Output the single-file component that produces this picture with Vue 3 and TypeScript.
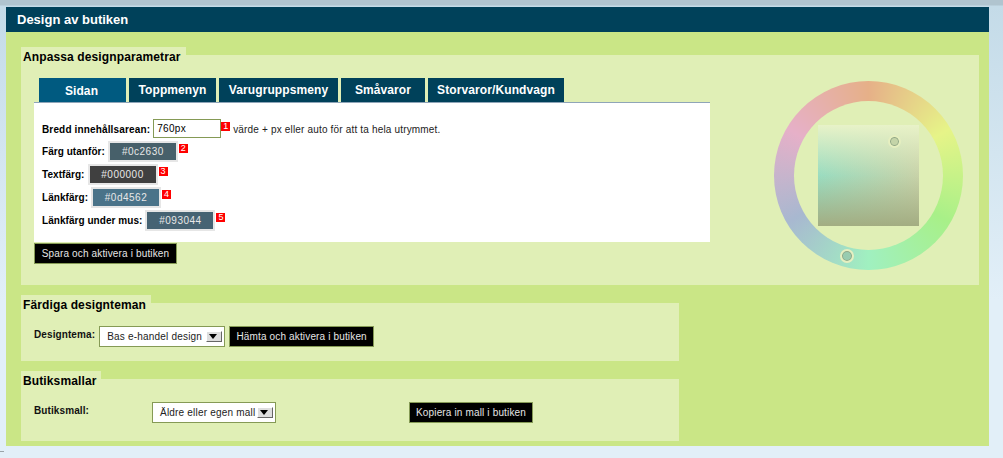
<script setup lang="ts">
import { ref } from 'vue'

const tabs = ['Sidan', 'Toppmenyn', 'Varugruppsmeny', 'Småvaror', 'Storvaror/Kundvagn']
const widths = [87, 87, 119, 84, 136]
const active = ref(0)
const colors = [
  { label: 'Färg utanför:', value: '#0c2630', bg: '#47606a', n: 2 },
  { label: 'Textfärg:', value: '#000000', bg: '#404040', n: 3 },
  { label: 'Länkfärg:', value: '#0d4562', bg: '#4a7389', n: 4 },
  { label: 'Länkfärg under mus:', value: '#093044', bg: '#466373', n: 5 }
]
const hues = ['#e6b088', '#e6f488', '#a8f088', '#a0f0c0', '#a8b8d0', '#e6b0c8', '#e6b088']
const ringGradient = `conic-gradient(${hues.join(',')})`
</script>

<template>
  <div class="page">
    <span class="speck"></span>
    <div class="panel">
      <h1 class="title">Design av butiken</h1>
      <div class="content">
        <section class="box">
          <h2 class="legend">Anpassa designparametrar</h2>
          <div class="body body-main">
            <div class="left">
              <div class="tabs">
                <button
                  v-for="(t, i) in tabs"
                  :key="t"
                  class="tab"
                  :class="{ on: active === i }"
                  :style="{ width: widths[i] + 'px' }"
                  @click="active = i"
                >{{ t }}</button>
              </div>
              <div class="sheet">
                <div class="row first">
                  <label>Bredd innehållsarean:</label>
                  <input class="text" value="760px" />
                  <sup class="num">1</sup>
                  <span class="hint">värde + px eller auto för att ta hela utrymmet.</span>
                </div>
                <div v-for="c in colors" :key="c.n" class="row">
                  <label>{{ c.label }}</label>
                  <span class="swatch" :style="{ background: c.bg }">{{ c.value }}</span>
                  <sup class="num">{{ c.n }}</sup>
                </div>
              </div>
              <button class="btn save">Spara och aktivera i butiken</button>
            </div>
            <div class="wheel" :style="{ background: ringGradient }">
              <div class="hole">
                <div class="square">
                  <span class="knob k1"></span>
                </div>
              </div>
              <span class="knob k2"></span>
            </div>
          </div>
        </section>

        <section class="box narrow">
          <h2 class="legend">Färdiga designteman</h2>
          <div class="body body-theme">
            <label class="lab">Designtema:</label>
            <div class="select s1">Bas e-handel design<span class="arrow"></span></div>
            <button class="btn fetch">Hämta och aktivera i butiken</button>
          </div>
        </section>

        <section class="box narrow">
          <h2 class="legend">Butiksmallar</h2>
          <div class="body body-tpl">
            <label class="lab l2">Butiksmall:</label>
            <div class="select s2">Äldre eller egen mall<span class="arrow"></span></div>
            <button class="btn copy">Kopiera in mall i butiken</button>
          </div>
        </section>
      </div>
    </div>
  </div>
</template>

<style>
html, body { margin: 0; background: #e2eff8; }
</style>

<style scoped>
.page {
  position: relative;
  width: 1003px;
  height: 458px;
  overflow: hidden;
  padding: 7px 14px 0 6px;
  box-sizing: border-box;
  font-family: "Liberation Sans", Arial, sans-serif;
  color: #000;
  background: linear-gradient(180deg, #b0c4cf 0, #b0c4cf 5px, #c4dbe8 6px, #e2eff8 300px);
}
.speck { position: absolute; left: 0; top: 451px; width: 4px; height: 1px; background: #9aa4a8; }
.panel { width: 983px; }
.title {
  margin: 0;
  height: 25px;
  line-height: 25px;
  padding-left: 11px;
  background: #00415a;
  color: #fff;
  font-size: 13px;
  font-weight: bold;
}
.content {
  height: 414px;
  background: #cae686;
  padding: 15px 0 0 15px;
  box-sizing: border-box;
}
.box { width: 958px; margin-bottom: 10px; }
.box.narrow { width: 658px; }
.legend {
  position: relative;
  z-index: 1;
  display: block;
  width: fit-content;
  margin: 0;
  background: #e0efb6;
  font-size: 12px;
  letter-spacing: .12px;
  line-height: 20px;
  height: 8px;
  padding: 0 5px 0 2px;
  white-space: nowrap;
}
.body { background: #e0efb6; display: flex; }
.body-main { height: 230px; position: relative; }
.left { width: 689px; padding: 0 0 0 13px; }
.tabs { display: flex; gap: 3px; padding: 23px 0 0 5px; height: 24px; }
.tab {
  border: 0;
  padding: 0;
  height: 24px;
  background: #00415a;
  color: #fff;
  font: bold 12px "Liberation Sans", Arial, sans-serif;
  letter-spacing: .1px;
  cursor: pointer;
}
.tab.on { background: #005a80; padding: 2px 2px 0 0; }
.sheet {
  width: 676px;
  height: 140px;
  box-sizing: border-box;
  background: #fff;
  border-top: 1px solid #8fa5b8;
  padding-top: 16px;
}
.row {
  display: flex;
  align-items: flex-start;
  height: 23px;
  padding-left: 8px;
  font-size: 10px;
}
.row.first { height: 22px; }
.row label {
  font-weight: bold;
  line-height: 21px;
  margin-right: 3px;
  letter-spacing: .05px;
  white-space: nowrap;
}
.row.first label { letter-spacing: .15px; }
.text {
  width: 68px;
  height: 19px;
  box-sizing: border-box;
  border: 1px solid #859a55;
  padding: 0 3px;
  font: 10px "Liberation Sans", Arial, sans-serif;
  letter-spacing: .3px;
  outline: none;
}
.swatch {
  box-sizing: border-box;
  width: 70px;
  height: 21px;
  line-height: 18px;
  border: 2px solid #e6e6e6;
  text-align: center;
  color: #e8e8e8;
  letter-spacing: .5px;
}
.num {
  width: 9px;
  height: 9px;
  margin: 3px 0 0 1px;
  background: #f00;
  color: #fff;
  font-size: 9px;
  line-height: 9px;
  text-align: center;
}
.first .num { margin-left: 0; }
.hint { margin-left: 3px; line-height: 22px; font-size: 10px; letter-spacing: .17px; color: #222; }
.btn {
  height: 21px;
  padding: 0;
  box-sizing: border-box;
  border: 1px solid #859a55;
  background: #000;
  color: #e6e6e6;
  font: 10px "Liberation Sans", Arial, sans-serif;
  letter-spacing: .15px;
  cursor: pointer;
}
.save { width: 143px; margin-top: 1px; display: block; }
.wheel {
  position: absolute;
  left: 753px;
  top: 26px;
  width: 189px;
  height: 189px;
  border-radius: 50%;
  display: flex;
  align-items: center;
  justify-content: center;
}
.hole {
  width: 149px;
  height: 149px;
  border-radius: 50%;
  background: #e0efb6;
  display: flex;
  align-items: center;
  justify-content: center;
}
.square {
  position: relative;
  width: 101px;
  height: 101px;
  background:
    linear-gradient(180deg, #e8f2c8 0, rgba(232,242,200,0) 50%, rgba(163,173,130,0) 50%, #a3ad82 100%),
    linear-gradient(90deg, #9adcc0 0, #c8d2a8 100%);
}
.knob {
  position: absolute;
  box-sizing: border-box;
  width: 13px;
  height: 13px;
  border-radius: 50%;
  border: 2px solid #e6efc0;
  box-shadow: inset 0 0 0 1px #8fa585;
}
.k1 { left: 70px; top: 10px; background: #c4d4a8; }
.k2 { left: 66px; top: 168px; width: 14px; height: 14px; background: #98ccb0; }
.body-theme { height: 58px; align-items: flex-start; padding-top: 23px; box-sizing: border-box; }
.body-tpl { height: 62px; align-items: flex-start; padding-top: 23px; box-sizing: border-box; }
.lab { font-size: 10px; font-weight: bold; margin-left: 13px; margin-top: 3px; letter-spacing: .1px; color: #111; }
.select {
  position: relative;
  box-sizing: border-box;
  height: 21px;
  line-height: 19px;
  border: 1px solid #859a55;
  background: #fff;
  font-size: 10px;
  letter-spacing: .2px;
  color: #222;
  padding-left: 7px;
  white-space: nowrap;
}
.s1 { width: 126px; margin-left: 4px; }
.s2 { width: 124px; margin-left: 63px; }
.arrow {
  position: absolute;
  right: 2px;
  top: 4px;
  width: 16px;
  height: 11px;
  background: #dedede;
  border: 1px solid;
  border-color: #fff #666 #666 #fff;
  box-sizing: border-box;
}
.arrow::after {
  content: "";
  position: absolute;
  left: 2px;
  top: 2px;
  border: 4.5px solid transparent;
  border-top: 5px solid #000;
  border-bottom: 0;
}
.fetch { width: 145px; margin-left: 4px; }
.copy { width: 124px; margin-left: 133px; }
</style>
